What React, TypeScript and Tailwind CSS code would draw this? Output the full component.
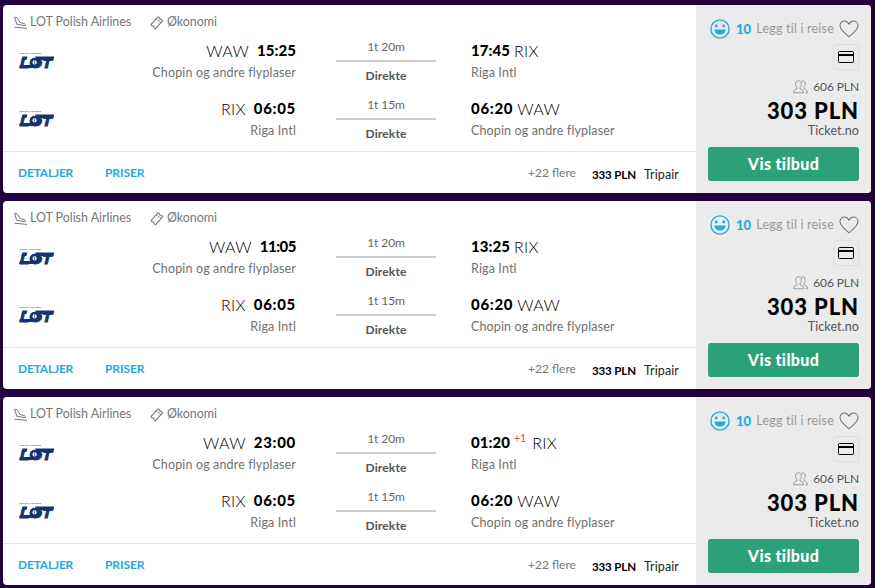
import clsx from 'clsx';

interface Leg {
  from: string;
  depart: string;
  to: string;
  arrive: string;
  duration: string;
  plusDays?: string;
}

const AIRPORTS: Record<string, string> = {
  WAW: 'Chopin og andre flyplaser',
  RIX: 'Riga Intl',
};

const returnLeg: Leg = { from: 'RIX', depart: '06:05', to: 'WAW', arrive: '06:20', duration: '1t 15m' };

const trips: Leg[][] = [
  [{ from: 'WAW', depart: '15:25', to: 'RIX', arrive: '17:45', duration: '1t 20m' }, returnLeg],
  [{ from: 'WAW', depart: '11:05', to: 'RIX', arrive: '13:25', duration: '1t 20m' }, returnLeg],
  [{ from: 'WAW', depart: '23:00', to: 'RIX', arrive: '01:20', duration: '1t 20m', plusDays: '+1' }, returnLeg],
];

function PlaneIcon() {
  return (
    <svg width="14" height="14" viewBox="0 0 14 14" fill="none" stroke="#777" strokeWidth="1" strokeLinejoin="round" strokeLinecap="round">
      <path d="M1 1.2 L3 1.6 L6 6.3 L10 7.6 C12 8.2 12.2 9.6 10.6 9.6 L3 8.3 Z" />
      <path d="M1 11.2 L12.6 12.4" />
    </svg>
  );
}

function TicketIcon() {
  return (
    <svg width="14" height="14" viewBox="0 0 14 14" fill="none" stroke="#777" strokeWidth="1.1" strokeLinejoin="round">
      <path d="M7.6 1 L9.3 1.4 C9.3 2.9 10.2 3.6 11.6 3.2 L12.8 4.6 L5.4 12.8 L4 11.6 C4.2 10.2 3.5 9.6 2.2 10 L1 8.7 Z" />
      <path d="M6.3 2.9 L11 6.7" strokeDasharray="1.5 1" />
    </svg>
  );
}

function LotLogo() {
  return (
    <svg width="36" height="18" viewBox="0 0 36 18" fill="#14336f">
      <text x="0" y="2.3" fontFamily="Liberation Sans" fontSize="2.4" fontWeight="700" fontStyle="italic" textLength="22" lengthAdjust="spacingAndGlyphs" opacity="0.8">
        POLISH AIRLINES
      </text>
      <text x="0.8" y="15.7" fontFamily="Liberation Sans" fontSize="13" fontWeight="700" fontStyle="italic" textLength="32" lengthAdjust="spacingAndGlyphs" stroke="#14336f" strokeWidth="0.8">
        LOT
      </text>
      <path d="M3.4 4.6 H8.4 L7.4 8 H2.6 Z M16 4.6 H35.2 L34.4 7.9 H18 Z M0.9 13 H14 V16.1 H0.1 Z" />
      <ellipse cx="15.6" cy="10.4" rx="5" ry="4.6" />
      <circle cx="15.6" cy="10.4" r="2.1" fill="#fff" />
      <path d="M15.6 8.9 V11.9" stroke="#14336f" strokeWidth="0.7" />
    </svg>
  );
}

function SmileIcon() {
  return (
    <svg width="20" height="20" viewBox="0 0 20 20" fill="#1fade4">
      <circle cx="10" cy="10" r="9.1" fill="none" stroke="#1fade4" strokeWidth="1.4" />
      <circle cx="6.2" cy="7" r="1.4" />
      <circle cx="13.8" cy="7" r="1.4" />
      <path d="M4.4 10.6 H15.6 C15.4 13.8 13 15.6 10 15.6 C7 15.6 4.6 13.8 4.4 10.6 Z" />
    </svg>
  );
}

function HeartIcon() {
  return (
    <svg width="20" height="18" viewBox="0 0 20 18" fill="none" stroke="#777" strokeWidth="1.1" strokeLinejoin="round">
      <path d="M10 16.8 C7 14.3 1 10 1 5.6 C1 3 2.9 1 5.3 1 C7.5 1 9 2.3 10 4.2 C11 2.3 12.5 1 14.7 1 C17.1 1 19 3 19 5.6 C19 10 13 14.3 10 16.8 Z" />
    </svg>
  );
}

function CardIcon() {
  return (
    <svg width="16" height="12" viewBox="0 0 16 12" fill="none" stroke="#000">
      <rect x="0.5" y="0.5" width="15" height="11" rx="1" />
      <path d="M0 4 H16" strokeWidth="2" />
    </svg>
  );
}

function PeopleIcon() {
  return (
    <svg width="15" height="14" viewBox="0 0 15 14" fill="none" stroke="#999" strokeWidth="1" strokeLinejoin="round">
      <path d="M5.5 0.8 C7.5 0.8 8.5 2.2 8.4 4.2 C8.3 6 7.6 7 7 7.6 V8.8 C8.5 9.5 10.4 9.8 10.4 12.8 H0.6 C0.6 9.8 2.5 9.5 4 8.8 V7.6 C3.4 7 2.7 6 2.6 4.2 C2.5 2.2 3.5 0.8 5.5 0.8 Z" />
      <path d="M8.6 1 C11 0.3 12.5 2 12.2 4.4 C12 6 11.4 6.8 10.8 7.4 V8.6 C12.4 9.3 14.4 9.6 14.4 12.8 H12.2" />
    </svg>
  );
}

function Time({ value }: { value: string }) {
  // "1" is a narrow figure, so times that contain it are set tighter
  const ones = value.split('1').length - 1;
  return (
    <span
      className={clsx(
        'text-[15px] font-black text-black',
        ones === 0 && 'tracking-[0.7px]',
        ones === 1 && 'tracking-[0.05px]',
        ones > 1 && 'tracking-[-0.5px]',
      )}
    >
      {value}
    </span>
  );
}

function LegRow({ leg }: { leg: Leg }) {
  return (
    <div className="flex h-[46px]">
      <div className="w-[100px] pl-4 pt-[13px]">
        <LotLogo />
      </div>
      <div className="w-[193px] flex flex-col items-end">
        <div className="h-[23px] flex items-center gap-2">
          <span className="text-base font-light tracking-[0.3px] text-black">{leg.from}</span>
          <Time value={leg.depart} />
        </div>
        <p className="mt-0.5 h-[18px] leading-[18px] text-[12.5px] tracking-[0.14px] text-[#707070]">{AIRPORTS[leg.from]}</p>
      </div>
      <div className="ml-10 w-[100px] flex flex-col items-center text-xs text-[#666]">
        <p className="h-4 leading-4 tracking-[-0.1px]">{leg.duration}</p>
        <div className="mt-[5px] h-0.5 w-full shrink-0 bg-[#ccc]"></div>
        <p className="mt-[5px] leading-[18px] font-bold tracking-[0.15px] text-[#555]">Direkte</p>
      </div>
      <div className="ml-[35px]">
        <div className="h-[23px] flex items-center gap-1">
          <Time value={leg.arrive} />
          {leg.plusDays && <span className="-mt-2 text-[10.5px] mr-0.5 text-[#ee4444]">{leg.plusDays}</span>}
          <span className="text-base font-light tracking-[0.3px] text-black">{leg.to}</span>
        </div>
        <p className="mt-0.5 h-[18px] leading-[18px] text-[12.5px] tracking-[0.14px] text-[#707070]">{AIRPORTS[leg.to]}</p>
      </div>
    </div>
  );
}

function TripCard({ legs }: { legs: Leg[] }) {
  return (
    <div className="flex h-[188px] rounded overflow-hidden bg-white">
      <div className="w-[693px] flex flex-col">
        <div className="h-8 pt-[3px] pl-[11px] flex items-center text-[12.5px] tracking-[-0.05px] text-[#777]">
          <PlaneIcon />
          <span className="ml-0.5 w-[120px]">LOT Polish Airlines</span>
          <TicketIcon />
          <span className="ml-[3px]">Økonomi</span>
        </div>
        <div className="pt-0.5 h-[114px] flex flex-col gap-3">
          {legs.map((leg) => (
            <LegRow key={leg.depart + leg.from} leg={leg} />
          ))}
        </div>
        <div className="flex-1 flex items-center border-t border-[#e3e3e3] pl-[15px] pr-[17px] text-xs">
          <a className="w-[87px] font-bold tracking-[-0.2px] text-[#1fa9e1]">DETALJER</a>
          <a className="font-bold tracking-[-0.1px] text-[#1fa9e1]">PRISER</a>
          <span className="ml-auto text-[#777]">+22 flere</span>
          <span className="ml-4 mt-1 text-[11.5px] font-bold tracking-[-0.1px] text-black">333 PLN</span>
          <span className="ml-2 mt-[5px] text-[12.5px] tracking-[0.1px] text-[#222]">Tripair</span>
        </div>
      </div>
      <div className="w-[175px] px-3 pt-3.5 bg-[#ecebeb] flex flex-col items-end">
        <div className="h-5 w-full flex items-center pl-0.5">
          <SmileIcon />
          <span className="ml-1.5 mt-px text-[13px] font-black text-[#1fa9e1]">10</span>
          <span className="ml-auto mr-[5px] mt-px text-[12.5px] tracking-[0.2px] text-[#999]">Legg til i reise</span>
          <HeartIcon />
        </div>
        <div className="mt-[5px] size-[26px] shrink-0 flex items-center justify-center border border-[#dedede] rounded-xs">
          <CardIcon />
        </div>
        <div className="mt-[9px] h-4 flex items-center gap-[5px] text-xs tracking-[-0.1px] text-[#555]">
          <PeopleIcon />
          606 PLN
        </div>
        <p className="mt-[3px] h-[26px] leading-[26px] text-[22px] font-black tracking-[0.9px] text-black">303 PLN</p>
        <p className="-mt-px h-4 leading-4 text-[12.5px] tracking-[0.1px] text-[#555]">Ticket.no</p>
        <button className="mt-2 h-[34px] w-full rounded-[3px] bg-[#2ca079] text-base font-black tracking-[0.35px] text-white">Vis tilbud</button>
      </div>
    </div>
  );
}

export default function App() {
  return (
    <div className="h-[588px] w-[875px] overflow-hidden bg-[#22003e] pt-[5px] pl-[3px] pr-1 flex flex-col gap-2 font-[Lato,'Open_Sans',sans-serif]">
      {trips.map((legs) => (
        <TripCard key={legs[0].depart} legs={legs} />
      ))}
    </div>
  );
}
